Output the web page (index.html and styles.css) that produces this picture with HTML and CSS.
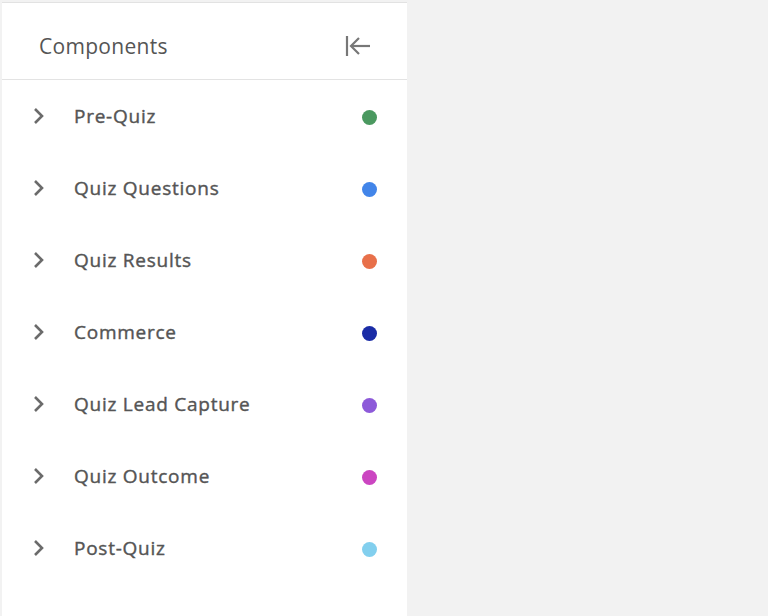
FILE: index.html
```html
<!DOCTYPE html>
<html lang="en">
<head>
<meta charset="utf-8">
<title>Components</title>
<link rel="stylesheet" href="styles.css">
</head>
<body>
<aside class="sidebar">
  <header class="sidebar-header">
    <h2 class="sidebar-title">Components</h2>
    <button class="collapse-btn" aria-label="Collapse">
      <svg width="26" height="22" viewBox="0 0 26 22" fill="none" stroke="#777" stroke-width="2.2" stroke-linecap="butt">
        <line x1="2" y1="1" x2="2" y2="21"/>
        <line x1="6" y1="11" x2="25" y2="11"/>
        <polyline points="14,3 6,11 14,19" stroke-linejoin="miter"/>
      </svg>
    </button>
  </header>
  <ul class="list">
    <li class="row"><svg class="chev" width="12" height="16" viewBox="0 0 12 16"><polyline points="2,1 9,8 2,15"/></svg><span class="label">Pre-Quiz</span><span class="dot dot-green"></span></li>
    <li class="row"><svg class="chev" width="12" height="16" viewBox="0 0 12 16"><polyline points="2,1 9,8 2,15"/></svg><span class="label">Quiz Questions</span><span class="dot dot-blue"></span></li>
    <li class="row"><svg class="chev" width="12" height="16" viewBox="0 0 12 16"><polyline points="2,1 9,8 2,15"/></svg><span class="label">Quiz Results</span><span class="dot dot-orange"></span></li>
    <li class="row"><svg class="chev" width="12" height="16" viewBox="0 0 12 16"><polyline points="2,1 9,8 2,15"/></svg><span class="label">Commerce</span><span class="dot dot-navy"></span></li>
    <li class="row"><svg class="chev" width="12" height="16" viewBox="0 0 12 16"><polyline points="2,1 9,8 2,15"/></svg><span class="label">Quiz Lead Capture</span><span class="dot dot-purple"></span></li>
    <li class="row"><svg class="chev" width="12" height="16" viewBox="0 0 12 16"><polyline points="2,1 9,8 2,15"/></svg><span class="label">Quiz Outcome</span><span class="dot dot-magenta"></span></li>
    <li class="row"><svg class="chev" width="12" height="16" viewBox="0 0 12 16"><polyline points="2,1 9,8 2,15"/></svg><span class="label">Post-Quiz</span><span class="dot dot-sky"></span></li>
  </ul>
</aside>
</body>
</html>
```
FILE: styles.css
```css
* { box-sizing: border-box; }
html, body { height: 100%; }
body {
  margin: 0;
  padding-top: 2px;
  background: #f2f2f2;
  font-family: "Open Sans", "Noto Sans", sans-serif;
  color: #555;
  overflow: hidden;
}
.sidebar {
  margin-left: 2px;
  width: 405px;
  height: 100%;
  background: #fff;
  border-top: 1px solid #e2e2e2;
}
.sidebar-header {
  height: 77px;
  border-bottom: 1px solid #e3e3e3;
  display: flex;
  align-items: center;
  justify-content: space-between;
  padding: 10px 36px 0 37px;
}
.sidebar-title {
  margin: 0;
  font-size: 21px;
  font-weight: 400;
  color: #555;
  letter-spacing: 0.3px;
}
.collapse-btn {
  border: 0;
  background: none;
  padding: 0;
  display: flex;
}
.list {
  list-style: none;
  margin: 0;
  padding: 0;
}
.row {
  height: 72px;
  display: flex;
  align-items: center;
  padding: 0 30px;
}
.chev {
  fill: none;
  stroke: #6b6b6b;
  stroke-width: 2.6;
  stroke-linejoin: miter;
  margin-left: 1px;
}
.label {
  margin-left: 29px;
  flex: 1;
  font-size: 19px;
  font-weight: 400;
  color: #555;
  letter-spacing: 0.75px;
  -webkit-text-stroke: 0.4px #555;
}
.dot {
  width: 15px;
  height: 15px;
  border-radius: 50%;
  margin-top: 3px;
}
.dot-green { background: #4b9960; }
.dot-blue { background: #4285e9; }
.dot-orange { background: #e8704a; }
.dot-navy { background: #1a2ca6; }
.dot-purple { background: #8d5ad9; }
.dot-magenta { background: #cb45c1; }
.dot-sky { background: #82cfee; }
```
